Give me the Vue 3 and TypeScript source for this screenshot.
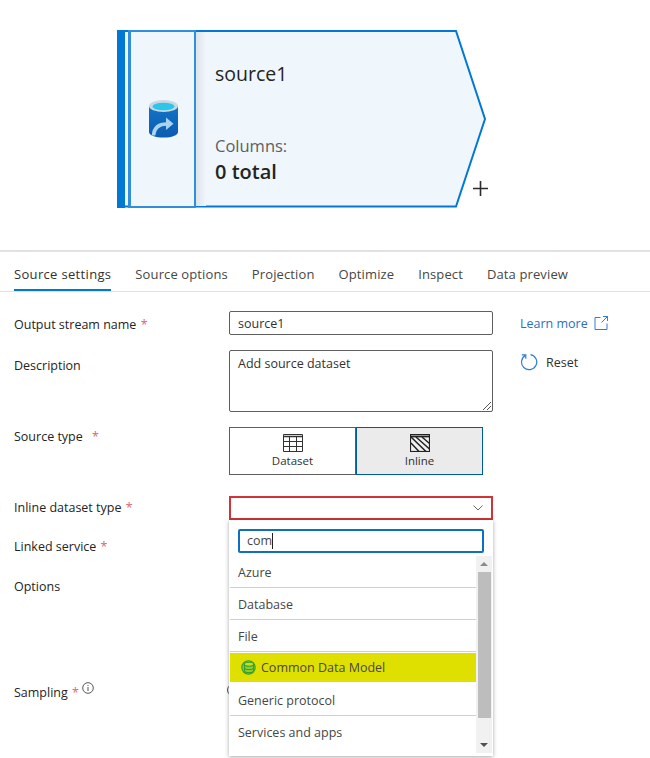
<script setup lang="ts">
const tabs: string[] = ['Source settings', 'Source options', 'Projection', 'Optimize', 'Inspect', 'Data preview']
</script>

<template>
  <div class="page">
    <section class="canvas">
      <div class="node">
        <svg class="node-shape" width="370" height="180" viewBox="0 0 370 180">
          <defs>
            <linearGradient id="fade" x1="0" y1="0" x2="1" y2="0">
              <stop offset="0" stop-color="#dfe3e8" />
              <stop offset="1" stop-color="#eff6fc" />
            </linearGradient>
          </defs>
          <path d="M0 1H339L368 89 339 176.500H0Z" fill="#eff6fc" stroke="#0078d4" stroke-width="2" />
          <rect x="79" y="2" width="10" height="174" fill="url(#fade)" />
        </svg>
        <div class="node-bar"></div>
        <div class="node-icon">
          <svg width="30" height="38" viewBox="0 0 30 38">
            <defs>
              <linearGradient id="cyl" x1="0" y1="0" x2="0" y2="1">
                <stop offset="0" stop-color="#1373c6" />
                <stop offset="1" stop-color="#0b5cb0" />
              </linearGradient>
            </defs>
            <path d="M0 6V32C0 35.500 6.500 37.500 14.500 37.500S29 35.500 29 32V6Z" fill="url(#cyl)" />
            <ellipse cx="14.500" cy="6" rx="14.500" ry="6" fill="#c9d8e2" />
            <ellipse cx="14.500" cy="6.500" rx="11" ry="3.800" fill="#2cc7e8" />
            <path d="M4.500 35.500C5 28 9.500 24 18 24" fill="none" stroke="#a9d3f2" stroke-width="3.600" />
            <path d="M17 17.500L24.500 23.800 17 30Z" fill="#a9d3f2" />
          </svg>
        </div>
        <div class="node-text">
          <div class="node-title">source1</div>
          <div class="node-cols">Columns:</div>
          <div class="node-total">0 total</div>
        </div>
        <svg class="node-plus" width="15" height="15" viewBox="0 0 15 15">
          <path d="M7.500 0V15M0 7.500H15" stroke="#2b2b2b" stroke-width="1.600" fill="none" />
        </svg>
      </div>
    </section>

    <nav class="tabs">
      <span v-for="(tab, i) in tabs" :key="tab" class="tab" :class="{ active: i === 0 }">{{ tab }}</span>
    </nav>

    <form class="form" @submit.prevent>
      <div class="row row-output">
        <label class="label">Output stream name <i>*</i></label>
        <div class="field fake-input">source1</div>
        <a class="aside link">Learn more
          <svg width="14" height="14" viewBox="0 0 14 14" fill="none" stroke="#2f7fd0" stroke-width="1">
            <path d="M6.500 1.500H1V13.500H13V7.500M9 .5H13.500V5M13.500 .5L7.500 6.500" />
          </svg>
        </a>
      </div>

      <div class="row row-desc">
        <label class="label">Description</label>
        <div class="field fake-area">
          Add source dataset
          <svg class="grip" width="10" height="10" viewBox="0 0 10 10" stroke="#555" stroke-width="1">
            <path d="M9 1L1 9M9 5L5 9" />
          </svg>
        </div>
        <div class="aside reset">
          <svg width="18" height="18" viewBox="0 0 18 18" fill="none" stroke="#2f7fd0" stroke-width="1.200">
            <path d="M5.500 2.400A7.600 7.600 0 1 0 10.500 1.600" />
            <path d="M1.800 1.800H5.800V5.800" />
          </svg>
          <span>Reset</span>
        </div>
      </div>

      <div class="row row-type">
        <label class="label">Source type <i class="wide">*</i></label>
        <div class="toggle">
          <div class="toggle-btn">
            <svg width="20" height="18" viewBox="0 0 20 18" fill="none" stroke="#333" stroke-width="1">
              <path d="M.5 .5H19.500V17.500H.5Z" />
              <path d="M.5 2.500H19.500" stroke-width="1.500" />
              <path d="M.5 7.500H19.500M.5 12.500H19.500M6.500 3V17.500M13.500 3V17.500" />
            </svg>
            <span>Dataset</span>
          </div>
          <div class="toggle-btn selected">
            <svg width="20" height="18" viewBox="0 0 20 18" fill="none" stroke="#222" stroke-width="1.200">
              <rect x=".5" y=".5" width="19" height="17" fill="#f2f2f2" />
              <path d="M.5 2.500H19.500" stroke-width="1.800" />
              <path d="M1 3L16 17.500M6 3L19.500 15M12 3L19.500 9.500M1 9L9 17.500" stroke-width="1.500" />
            </svg>
            <span>Inline</span>
          </div>
        </div>
      </div>

      <div class="row row-inline">
        <label class="label">Inline dataset type <i>*</i></label>
        <div class="select-wrap">
          <div class="select">
            <svg width="10" height="6" viewBox="0 0 10 6" fill="none" stroke="#6b6b6b" stroke-width="1">
              <path d="M.5 .5L5 5 9.500 .5" />
            </svg>
          </div>
          <div class="menu">
            <div class="search">com<span class="caret"></span></div>
            <div class="menu-body">
              <ul class="options">
                <li>Azure</li>
                <li>Database</li>
                <li>File</li>
                <li class="hit">
                  <svg width="15" height="15" viewBox="0 0 15 15" fill="none" stroke="#3a9e2e" stroke-width="1.100">
                    <circle cx="7.500" cy="7.500" r="6.700" fill="#8fce2a" />
                    <ellipse cx="8" cy="4.300" rx="4.600" ry="2" fill="#c6e01a" />
                    <path d="M3.400 4.300V10.500C3.400 11.700 5.500 12.600 8 12.600S12.600 11.700 12.600 10.500V4.300M3.400 7.400C3.400 8.600 5.500 9.500 8 9.500S12.600 8.600 12.600 7.400" />
                  </svg>
                  Common Data Model
                </li>
                <li>Generic protocol</li>
                <li>Services and apps</li>
              </ul>
              <div class="scrollbar">
                <span class="arrow up"></span>
                <span class="thumb"></span>
                <span class="arrow down"></span>
              </div>
            </div>
          </div>
        </div>
      </div>

      <div class="row row-linked"><label class="label">Linked service <i>*</i></label></div>
      <div class="row row-options"><label class="label">Options</label></div>
      <div class="row row-sampling">
        <label class="label">Sampling <i>*</i>
          <svg class="info" width="12" height="12" viewBox="0 0 12 12" fill="none" stroke="#444" stroke-width=".9">
            <circle cx="6" cy="6" r="5.300" />
            <path d="M6 5V9M6 3V4" />
          </svg>
        </label>
        <span class="radio"></span>
      </div>
    </form>
  </div>
</template>

<style scoped>
.page {
  width: 650px;
  height: 758px;
  overflow: hidden;
  background: #fff;
  color: #323130;
  font-family: "Open Sans", "Noto Sans", sans-serif;
  font-size: 12px;
}
.canvas {
  height: 250px;
  padding: 30px 0 0 117px;
  box-sizing: border-box;
}
.node {
  position: relative;
  width: 370px;
  height: 178px;
  display: flex;
}
.node-shape {
  position: absolute;
  left: 0;
  top: 0;
}
.node-bar {
  position: relative;
  width: 8px;
  height: 178px;
  background: #0078d4;
  margin-right: 3px;
}
.node-icon {
  position: relative;
  width: 60px;
  height: 174px;
  border: 2px solid #2f8fdc;
  border-left-width: 3px;
  background: #eff6fc;
  display: flex;
  align-items: center;
  justify-content: center;
  padding-left: 3px;
  box-sizing: content-box;
}
.node-text {
  position: relative;
  margin-left: 19px;
  padding-top: 30px;
}
.node-title {
  font-size: 19.500px;
  line-height: 28px;
  color: #252423;
}
.node-cols {
  margin-top: 46px;
  font-size: 16.500px;
  line-height: 24px;
  color: #605e5c;
}
.node-total {
  font-size: 20px;
  line-height: 28px;
  font-weight: 600;
  color: #252423;
}
.node-plus {
  position: absolute;
  left: 356px;
  top: 151px;
}
.tabs {
  height: 39px;
  display: flex;
  gap: 24px;
  padding-left: 14px;
  border-top: 2px solid #e1e1e1;
  border-bottom: 1px solid #e1e1e1;
}
.tab {
  height: 39px;
  box-sizing: border-box;
  padding-top: 12px;
  font-size: 13px;
  line-height: 20px;
  letter-spacing: .12px;
  color: #484644;
}
.tab.active {
  color: #323130;
  letter-spacing: .33px;
  border-bottom: 2px solid #0078d4;
}
.form {
  padding: 19px 0 0 14px;
}
.row {
  position: relative;
  display: flex;
  align-items: flex-start;
}
.label {
  width: 215px;
  flex: none;
  padding-top: 1px;
  font-size: 12.500px;
  font-weight: 500;
  line-height: 20px;
  color: #252423;
}
.label i {
  font-style: normal;
  color: #d9667a;
  margin-left: 1px;
}
.label i.wide {
  margin-left: 6px;
}
.field {
  width: 264px;
  flex: none;
  box-sizing: border-box;
  border: 1px solid #605e5c;
  border-radius: 2px;
  padding: 0 8px;
  font-size: 12.500px;
}
.fake-input {
  height: 24px;
  padding-top: 1px;
  line-height: 21px;
}
.fake-area {
  position: relative;
  height: 62px;
  line-height: 22px;
  padding-top: 2px;
}
.grip {
  position: absolute;
  right: 0;
  bottom: 0;
}
.row-output {
  height: 24px;
  margin-bottom: 15px;
}
.row-output .label {
  padding-top: 4px;
}
.row-desc {
  height: 62px;
  margin-bottom: 15px;
}
.row-desc .label {
  padding-top: 6px;
}
.aside {
  margin-left: 27px;
  font-size: 12.500px;
}
.link {
  display: flex;
  align-items: center;
  gap: 6px;
  height: 24px;
  color: #2a70c0;
}
.reset {
  display: flex;
  align-items: center;
  gap: 8px;
  margin: 2px 0 0 27px;
  height: 20px;
}
.row-type {
  height: 48px;
  margin-bottom: 21px;
}
.row-type .label {
  margin-top: -1px;
}
.toggle {
  display: flex;
}
.toggle-btn {
  width: 127px;
  height: 48px;
  box-sizing: border-box;
  border: 1px solid #605e5c;
  display: flex;
  flex-direction: column;
  align-items: center;
  padding-top: 6px;
  font-size: 11.500px;
  line-height: 16px;
}
.toggle-btn.selected {
  background: #ebebeb;
  border-color: #005a9e;
}
.toggle-btn span {
  margin-top: 1px;
}
.row-inline {
  height: 24px;
  z-index: 2;
  margin-bottom: 16px;
}
.row-inline .label {
  padding-top: 2px;
}
.select-wrap {
  position: relative;
  width: 264px;
}
.select {
  height: 24px;
  box-sizing: border-box;
  border: 2px solid #d13438;
  display: flex;
  align-items: center;
  justify-content: flex-end;
  padding-right: 8px;
}
.menu {
  position: absolute;
  left: 0;
  top: 24px;
  width: 264px;
  height: 236px;
  box-sizing: border-box;
  background: #fff;
  box-shadow: 0 1px 4px rgba(0, 0, 0, .35);
  padding-top: 9px;
  z-index: 3;
}
.search {
  width: 246px;
  height: 24px;
  margin-left: 9px;
  box-sizing: border-box;
  border: 2px solid #106ebe;
  border-radius: 2px;
  padding-left: 7px;
  font-size: 12.500px;
  line-height: 20px;
  color: #484644;
  display: flex;
  align-items: center;
}
.caret {
  width: 1px;
  height: 16px;
  background: #222;
}
.menu-body {
  display: flex;
  margin-top: 3px;
  padding-left: 1px;
  height: 197px;
}
.options {
  list-style: none;
  margin: 0;
  padding: 0;
  width: 246px;
}
.options li {
  height: 32px;
  box-sizing: border-box;
  border-bottom: 1px solid #cfcfcf;
  padding: 7px 0 0 8px;
  font-size: 12.500px;
  font-weight: 500;
  line-height: 20px;
  color: #484644;
}
.options li:last-child {
  border-bottom: 0;
}
.options li.hit {
  height: 29px;
  margin: 1px 0 2px;
  border-bottom: 0;
  background: #e0e000;
  padding: 5px 0 0 11px;
  display: flex;
  align-items: flex-start;
  gap: 5px;
  font-weight: 400;
}
.options li.hit svg {
  margin-top: 2px;
}
.scrollbar {
  width: 16px;
  height: 197px;
  background: #f1f1f1;
  display: flex;
  flex-direction: column;
  align-items: center;
  justify-content: space-between;
}
.thumb {
  width: 13px;
  height: 146px;
  margin: -20px 0 0;
  background: #bdbdbd;
}
.arrow {
  width: 0;
  height: 0;
  margin: 6px 0;
  border-left: 4px solid transparent;
  border-right: 4px solid transparent;
}
.arrow.up {
  border-bottom: 4px solid #8a8a8a;
}
.arrow.down {
  border-top: 4px solid #505050;
}
.row-linked {
  height: 20px;
  margin-bottom: 20px;
}
.row-options {
  height: 20px;
  margin-bottom: 86px;
}
.row-sampling {
  height: 20px;
}
.info {
  position: relative;
  top: -3px;
  margin-left: 3px;
}
.radio {
  width: 12px;
  height: 12px;
  box-sizing: border-box;
  border: 1px solid #555;
  border-radius: 50%;
  margin: 2px 0 0 -2px;
}
</style>

<style>
html, body { margin: 0; background: #fff; }
</style>
